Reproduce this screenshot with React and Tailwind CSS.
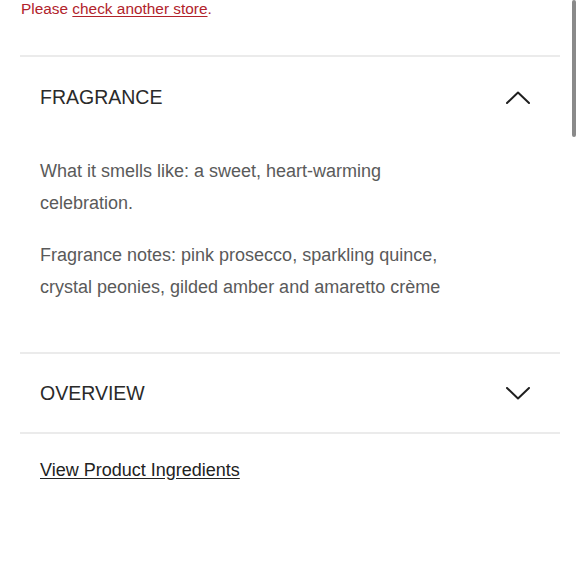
import React from 'react';

const Chevron = ({ up }) => (
  <svg width="24" height="13" viewBox="0 0 24 13" fill="none">
    <path
      d={up ? 'M1 12 L12 1.5 L23 12' : 'M1 1 L12 11.5 L23 1'}
      stroke="#1f1f1f"
      strokeWidth="2"
      strokeLinecap="round"
      strokeLinejoin="round"
    />
  </svg>
);

const App = () => {
  return (
    <div
      className="relative w-[580px] h-[580px] overflow-hidden bg-white"
      style={{ fontFamily: '"Liberation Sans", Arial, sans-serif' }}
    >
      <div className="px-[20px]">
        <div className="h-[55px]">
          <p className="text-[15.4px] leading-[18px] text-[#b1232b] pl-[1px]">
            Please <a className="underline underline-offset-2">check another store</a>.
          </p>
        </div>
        <div className="h-[2px] bg-[#ebebeb]"></div>

        <section>
          <div className="h-[80px] flex items-center justify-between pl-[20px] pr-[30px]">
            <h3 className="pt-[2px] text-[19.5px] text-[#2a2a2a]">FRAGRANCE</h3>
            <Chevron up />
          </div>
          <div className="pl-[20px] pr-[30px] pt-[18px] pb-[49px] text-[18px] leading-[32px] text-[#5a5a5a]">
            <p>What it smells like: a sweet, heart-warming<br />celebration.</p>
            <p className="mt-[20px]">
              Fragrance notes: pink prosecco, sparkling quince,<br />crystal peonies, gilded amber and amaretto crème
            </p>
          </div>
        </section>
        <div className="h-[2px] bg-[#ebebeb]"></div>

        <section>
          <div className="h-[78px] flex items-center justify-between pl-[20px] pr-[30px]">
            <h3 className="pt-[2px] text-[19.5px] text-[#2a2a2a]">OVERVIEW</h3>
            <Chevron />
          </div>
        </section>
        <div className="h-[2px] bg-[#ebebeb]"></div>

        <div className="pl-[20px] pt-[20px]">
          <a className="text-[18px] leading-[32px] text-[#222] underline underline-offset-2">
            View Product Ingredients
          </a>
        </div>
      </div>

      <div className="absolute right-[4px] top-0 w-[4px] h-[137px] rounded-full bg-[#8a8a8a]"></div>
    </div>
  );
};

export default App;
